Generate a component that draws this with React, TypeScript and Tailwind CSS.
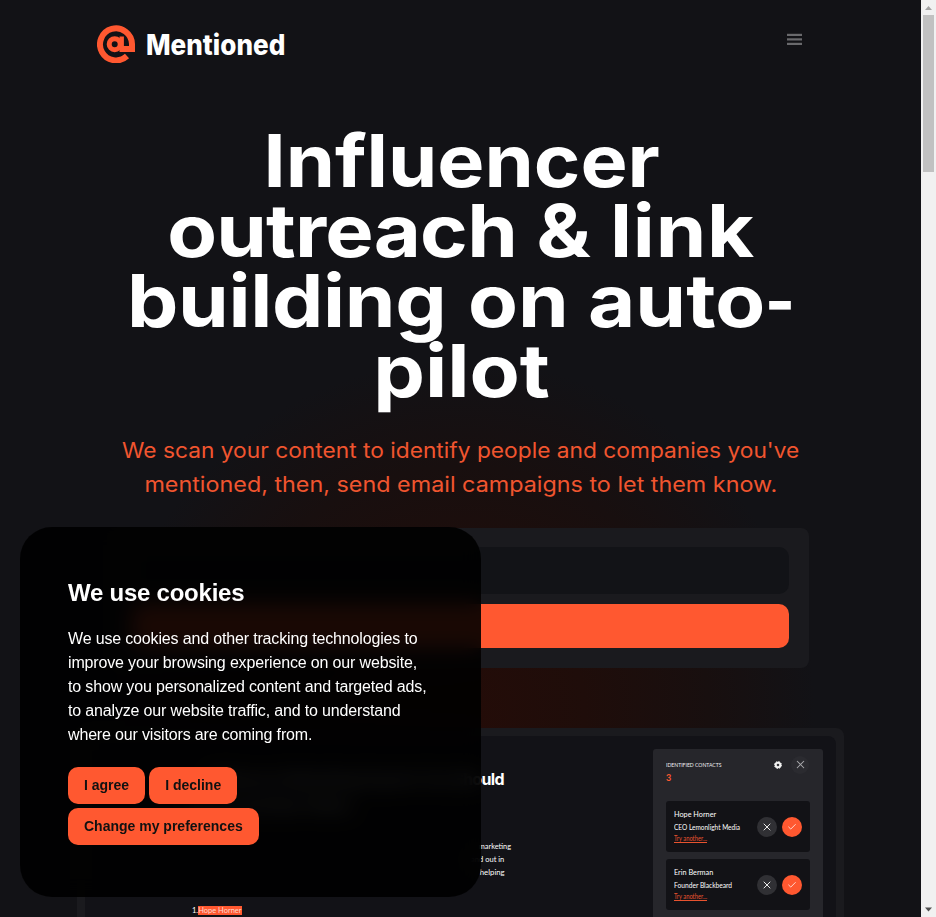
import { X, Check } from "lucide-react";

const contacts = [
  { name: "Hope Horner", nameScale: "scale-x-[0.91]", role: "CEO Lemonlight Media", roleScale: "scale-x-[0.93]" },
  { name: "Erin Berman", nameScale: "scale-x-[0.91]", role: "Founder Blackbeard", roleScale: "scale-x-[0.95]" },
];

function Logo() {
  return (
    <div className="flex h-[38px] items-center">
      <svg className="h-[38px] w-[38px]" viewBox="0 0 38 38" fill="none">
        <path d="M30 31 A16 16 0 1 1 35 19 V24 H25" stroke="#ff5830" strokeWidth="6" />
        <circle cx="17.700" cy="19.2" r="5.5" stroke="#ff5830" strokeWidth="5" />
        <path d="M24.700 11.500 V27" stroke="#ff5830" strokeWidth="4.400" />
      </svg>
      <span className="mt-[2px] ml-[11px] inline-block origin-left scale-x-[0.932] font-[Inter] text-[28px] leading-[38px] font-extrabold text-white">
        Mentioned
      </span>
    </div>
  );
}

function Gear() {
  return (
    <svg className="size-[8px]" viewBox="0 0 16 16" fill="none">
      <circle cx="8" cy="8" r="4.600" stroke="#f4f4f4" strokeWidth="4" />
      <circle cx="8" cy="8" r="7" stroke="#f4f4f4" strokeWidth="2" strokeDasharray="3 2.500" />
      <circle cx="8" cy="8" r="1" fill="#8a8a8e" />
    </svg>
  );
}

function Contact({ c }: { c: (typeof contacts)[number] }) {
  return (
    <div className="flex h-[51px] items-center justify-between rounded-[3px] bg-[#121216] pr-[8px] pl-[8px]">
      <div className="flex flex-col pb-[1px] font-[Lato] whitespace-nowrap text-white">
        <span className={`origin-left text-[8px] leading-[13px] ${c.nameScale}`}>{c.name}</span>
        <span className={`w-0 origin-left text-[7px] leading-[12px] ${c.roleScale}`}>{c.role}</span>
        <span className="w-0 origin-left scale-x-[0.83] text-[7px] leading-[11px] text-[#e8532f] underline">
          Try another...
        </span>
      </div>
      <div className="flex gap-[5px]">
        <span className="flex size-[20px] items-center justify-center rounded-full bg-[#303034]">
          <X size={12} strokeWidth={1.8} color="#ffffff" />
        </span>
        <span className="flex size-[20px] items-center justify-center rounded-full bg-[#ff5830]">
          <Check size={10} strokeWidth={2.2} color="#ffe3db" />
        </span>
      </div>
    </div>
  );
}

function CookieBanner() {
  const button = "h-[37px] rounded-[10px] bg-[#ff5830] px-4 text-[14px] leading-[21px] font-bold text-[#111]";
  return (
    <section className="absolute top-[527px] left-[20px] h-[370px] w-[461px] rounded-[32px] bg-black/90 p-12 font-['Liberation_Sans',sans-serif] text-white backdrop-blur-[10px]">
      <h2 className="text-[24px] leading-[36px] font-bold tracking-[-0.01em]">We use cookies</h2>
      <p className="mt-4 text-[16px] leading-[24px] tracking-[-0.01em]">
        We use cookies and other tracking technologies to improve your browsing experience on our website, to show you
        personalized content and targeted ads, to analyze our website traffic, and to understand where our visitors are
        coming from.
      </p>
      <div className="mt-5 flex w-[350px] flex-wrap gap-1">
        <button className={button}>I agree</button>
        <button className={button}>I decline</button>
        <button className={button}>Change my preferences</button>
      </div>
    </section>
  );
}

function Scrollbar() {
  return (
    <div className="flex h-full w-[15px] shrink-0 flex-col items-center justify-between bg-[#f1f1f1]">
      <div className="flex flex-col items-center">
        <svg className="h-[15px] w-[15px]" viewBox="0 0 15 15">
          <path d="M4 10 H11 L7.5 6 Z" fill="#a3a3a3" />
        </svg>
        <div className="h-[157px] w-[11px] bg-[#c1c1c1]" />
      </div>
      <svg className="h-[15px] w-[15px]" viewBox="0 0 15 15">
        <path d="M4 5.500 H11 L7.5 9.500 Z" fill="#505050" />
      </svg>
    </div>
  );
}

export default function App() {
  return (
    <div className="flex h-[917px] w-[936px] overflow-hidden bg-[#121216]">
      <div className="relative isolate h-full w-[921px] overflow-hidden">
        <div className="absolute top-[360px] left-[107px] -z-10 h-[708px] w-[708px] bg-[radial-gradient(circle_closest-side,#240c08_0%,#1f0d0a_35%,#180f0f_70%,#121216_100%)]" />

        <header className="flex h-[88px] items-start justify-between pr-[119px] pl-[97px]">
          <div className="pt-[25px]">
            <Logo />
          </div>
          <svg className="mt-[33px] h-[13px] w-[15px]" viewBox="0 0 15 13" fill="#69696c">
            <rect y="0.800" width="15" height="2.200" />
            <rect y="5.300" width="15" height="2.200" />
            <rect y="9.800" width="15" height="2.200" />
          </svg>
        </header>

        <main className="flex flex-col items-center">
          <h1 className="mt-[38px] flex flex-col items-center pl-[2px] font-[Inter] text-[73px] leading-[70px] font-bold whitespace-nowrap text-white">
            <span className="scale-x-[1.085]">Influencer</span>
            <span className="scale-x-[1.113]">
              <span className="tracking-[-0.7px]">outreach</span> &amp; <span className="tracking-[0.7px]">link</span>
            </span>
            <span className="scale-x-[1.117]">
              <span className="tracking-[-0.3px]">building</span> <span className="ml-[2px]">on auto</span>
              <span className="-mr-[6px] inline-block origin-left scale-x-[0.8]">-</span>
            </span>
            <span className="scale-x-[1.125]">pilot</span>
          </h1>
          <p className="mt-[28px] flex flex-col items-center pl-[1px] font-[Inter] text-[21px] leading-[34px] font-normal whitespace-nowrap text-[#f0552f]">
            <span className="scale-x-[1.083]">We scan your content to identify people and companies you've</span>
            <span className="scale-x-[1.111]">mentioned, then, send email campaigns to let them know.</span>
          </p>

          <div className="mt-[26px] flex h-[140px] w-[697px] flex-col gap-[10px] rounded-[8px] bg-[#1a1a1e] p-[20px] pt-[19px]">
            <div className="h-[47px] rounded-[10px] bg-[#121317]" />
            <div className="h-[44px] rounded-[10px] bg-[#ff5830]" />
          </div>

          <div className="mt-[60px] flex h-[400px] w-[767px] justify-between rounded-[8px] border-8 border-[#1a1a1e] bg-[#1a1a1e]">
            <div className="flex w-full justify-between rounded-[8px] bg-[#121217] pr-[13px]">
              <div className="flex flex-col pl-[107px] font-[Lato] text-white">
                <h3 className="flex w-[312px] flex-col pt-[30px] font-[Inter] text-[16px] leading-[26px] font-bold tracking-[-0.04em] whitespace-nowrap">
                  <span className="self-end">Influencer Marketing Experts You Should</span>
                  <span>Know and Also Follow</span>
                </h3>
                <div className="mt-[22px] flex w-[319px] flex-col items-end text-[8px] leading-[13px]">
                  <span className="origin-right scale-x-[0.92]">marketing</span>
                  <span className="mr-[7px] origin-right scale-x-[0.94]">and out in</span>
                  <span className="mr-[6px] origin-right scale-x-[0.97]">helping</span>
                </div>
                <div className="mt-[27px] flex items-center text-[7.500px] leading-[9px]">
                  <span>1.</span>
                  <span className="bg-[#ff5830] text-[#ffd9ce]">Hope Horner</span>
                </div>
              </div>

              <aside className="mt-[13px] flex w-[170px] flex-col rounded-t-[3px] bg-[#26262b] px-[13px]">
                <div className="flex h-[31px] items-center justify-between pr-[1px]">
                  <span className="w-[60px] origin-left scale-x-[0.85] font-[Lato] text-[6px] whitespace-nowrap text-[#f0f0f2]">
                    IDENTIFIED CONTACTS
                  </span>
                  <div className="flex items-center gap-[9px]">
                    <Gear />
                    <span className="flex size-[18px] items-center justify-center rounded-full bg-[#2b2b30]">
                      <X size={13} strokeWidth={1.9} color="#a9a9ac" />
                    </span>
                  </div>
                </div>
                <span className="-mt-[8px] h-[29px] font-[Lato] text-[9px] leading-[12px] font-bold text-[#ff5830]">3</span>
                <div className="flex flex-col gap-[7px]">
                  {contacts.map((c) => (
                    <Contact key={c.name} c={c} />
                  ))}
                  <div className="h-[51px] rounded-[3px] bg-[#121216]" />
                </div>
              </aside>
            </div>
          </div>
        </main>

        <CookieBanner />
      </div>
      <Scrollbar />
    </div>
  );
}
